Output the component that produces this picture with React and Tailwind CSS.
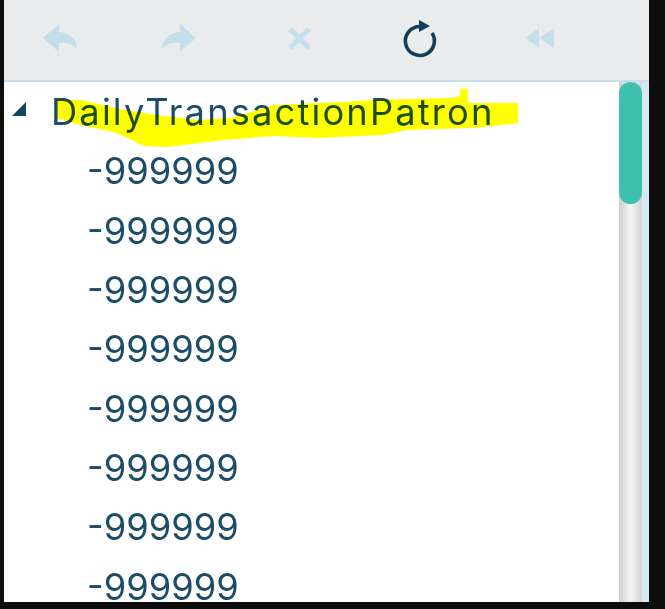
const rows = Array.from({ length: 8 });

function Toolbar() {
  return (
    <div className="h-[82px] shrink-0 bg-[#e9ebed] border-b-2 border-[#c5dfea] relative">
      <svg width="645" height="80" viewBox="4 0 645 80" className="block">
        <path d="M43 38 L59 24 V32 C70 33 77 39 77 49 C72 44 67 42 59 43 V52 Z" fill="#c5dfea" />
        <path d="M196 38 L180 24 V32 C169 33 162 39 162 49 C167 44 172 42 180 43 V52 Z" fill="#c5dfea" />
        <path d="M290 29 L309 48 M309 29 L290 48" stroke="#c5dfea" strokeWidth="5" fill="none" />
        <path d="M419 26.5 A14.5 14.5 0 1 0 432 33" stroke="#123f57" strokeWidth="3.6" fill="none" />
        <path d="M419 20 L430 26 L419 32 Z" fill="#123f57" />
        <path d="M525 38 L539 28 V48 Z M539 38 L554 28 V48 Z" fill="#c5dfea" />
      </svg>
    </div>
  );
}

export default function App() {
  return (
    <div className="w-[665px] h-[609px] bg-[#0d0d0d] pl-[4px] pr-[16px] pb-[7px] flex flex-col">
      <Toolbar />
      <div className="flex-1 min-h-0 flex bg-white overflow-hidden">
        <div className="flex-1 relative overflow-hidden text-[#1d4d66] text-[36.3px] font-['Inter',sans-serif]">
          <div className="relative h-[60px] flex items-center pl-[47px]">
            <svg width="14" height="14" viewBox="0 0 14 14" className="absolute left-[8px] top-[20px]">
              <path d="M14 0 V14 H0 Z" fill="#0f4763" />
            </svg>
            <span className="whitespace-nowrap tracking-[2.15px]">DailyTransactionPatron</span>
          </div>
          {rows.map((_, i) => (
            <div key={i} className="relative h-[59.3px] flex items-center pl-[83px] whitespace-nowrap">-999999</div>
          ))}
          <svg width="520" height="70" viewBox="0 82 520 70" className="absolute left-0 top-0 mix-blend-multiply">
            <path d="M53 100 L77 100 L120 110 L153 115 L193 120 L227 118 L270 105 L337 102 L370 100 L447 98 L456 96 L456 89 L464 89 L464 103 L514 103 L514 123 L470 128 L403 130 L380 135 L313 138 L270 136 L220 140 L163 147 L140 146 L113 133 L77 125 L53 118 Z" fill="#ffff00" />
          </svg>
        </div>
        <div className="w-[30px] shrink-0 flex">
          <div className="w-[23px] bg-gradient-to-r from-[#cfcfcf] via-[#f4f4f4] to-[#d4d4d4]">
            <div className="h-[122px] rounded-full bg-[#3fbfae]"></div>
          </div>
          <div className="w-[7px] bg-[#d6e9f3]"></div>
        </div>
      </div>
    </div>
  );
}
